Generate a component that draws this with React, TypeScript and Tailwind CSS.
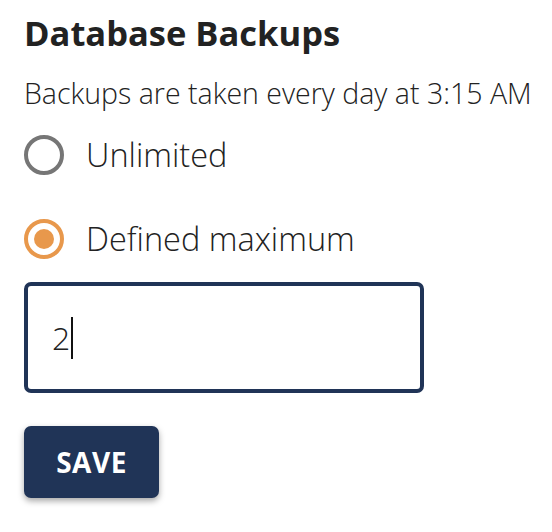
import { useState } from 'react';

// Radio redondo dibujado con CSS
function Radio({ checked }: { checked: boolean }) {
  return (
    <span
      className={
        checked
          ? 'flex items-center justify-center w-[40px] h-[40px] rounded-full border-[4px] border-[#e8984c]'
          : 'flex items-center justify-center w-[40px] h-[40px] rounded-full border-[4px] border-[#767676]'
      }
    >
      {checked && <span className="block w-[20px] h-[20px] rounded-full bg-[#e8984c]" />}
    </span>
  );
}

export default function App() {
  const [modo, setModo] = useState<'unlimited' | 'max'>('max');

  return (
    <div className="w-[552px] h-[532px] overflow-hidden bg-white pl-[24px] pt-[10px] font-['Open_Sans',sans-serif] text-[#222]">
      <h2 className="text-[34.5px] font-bold leading-[46px]">Database Backups</h2>
      <p className="mt-[18px] text-[28.5px] font-light leading-[39px] whitespace-nowrap">
        Backups are taken every day at 3:15 AM
      </p>

      <div className="mt-[20px] flex flex-col gap-[40px]">
        <label className="flex items-center h-[44px] gap-[22px] cursor-pointer" onClick={() => setModo('unlimited')}>
          <Radio checked={modo === 'unlimited'} />
          <span className="text-[32.5px] font-light leading-[44px]">Unlimited</span>
        </label>
        <label className="flex items-center h-[44px] gap-[22px] cursor-pointer" onClick={() => setModo('max')}>
          <Radio checked={modo === 'max'} />
          <span className="text-[32.5px] font-light leading-[44px]">Defined maximum</span>
        </label>
      </div>

      <div className="mt-[21px] w-[400px] h-[111px] rounded-[7px] border-[4px] border-[#203457] flex items-center pl-[24px]">
        <span className="text-[32px] font-light leading-none">2</span>
        <span className="ml-[1px] block w-[2px] h-[42px] bg-[#111]" />
      </div>

      <button className="mt-[33px] w-[135px] h-[72px] rounded-[7px] bg-[#203457] text-white text-[28px] font-bold tracking-[0.5px] shadow-[0_3px_6px_rgba(0,0,0,0.35)]">
        SAVE
      </button>
    </div>
  );
}
